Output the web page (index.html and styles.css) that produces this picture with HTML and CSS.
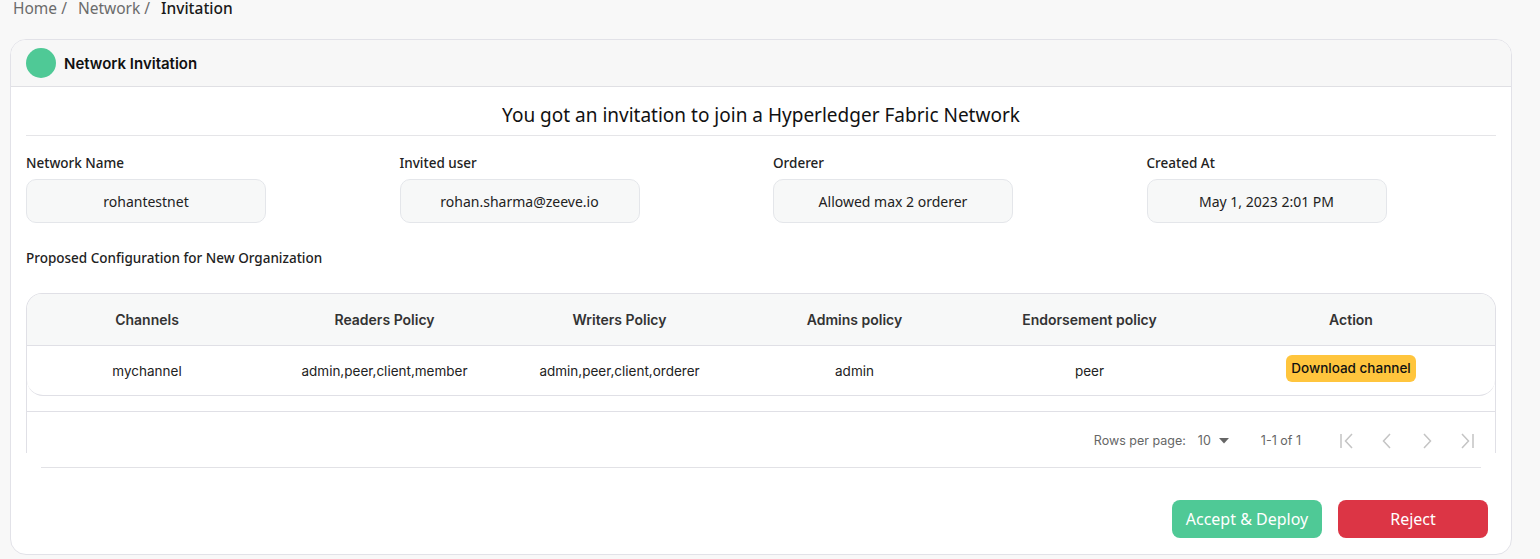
FILE: index.html
```html
<!DOCTYPE html>
<html>
<head>
<meta charset="utf-8">
<link rel="stylesheet" href="styles.css">
</head>
<body>
<nav class="crumbs">
  <span class="crumb">Home /</span>
  <span class="crumb">Network /</span>
  <span class="crumb current">Invitation</span>
</nav>
<section class="card">
  <header class="card-head">
    <span class="dot"></span>
    <span class="card-title">Network Invitation</span>
  </header>
  <div class="card-body">
    <h1 class="headline">You got an invitation to join a Hyperledger Fabric Network</h1>
    <div class="fields">
      <div class="field">
        <div class="label">Network Name</div>
        <div class="value">rohantestnet</div>
      </div>
      <div class="field">
        <div class="label">Invited user</div>
        <div class="value">rohan.sharma@zeeve.io</div>
      </div>
      <div class="field">
        <div class="label">Orderer</div>
        <div class="value">Allowed max 2 orderer</div>
      </div>
      <div class="field">
        <div class="label">Created At</div>
        <div class="value">May 1, 2023 2:01 PM</div>
      </div>
    </div>
    <div class="section-label">Proposed Configuration for New Organization</div>
    <div class="table-wrap">
      <div class="table">
        <div class="row head">
          <div class="cell">Channels</div>
          <div class="cell">Readers Policy</div>
          <div class="cell">Writers Policy</div>
          <div class="cell">Admins policy</div>
          <div class="cell">Endorsement policy</div>
          <div class="cell">Action</div>
        </div>
        <div class="row body">
          <div class="cell">mychannel</div>
          <div class="cell">admin,peer,client,member</div>
          <div class="cell">admin,peer,client,orderer</div>
          <div class="cell">admin</div>
          <div class="cell">peer</div>
          <div class="cell"><button class="dl">Download channel</button></div>
        </div>
      </div>
      <div class="pager">
        <span class="rpp">Rows per page:</span>
        <span class="sel">10 <svg width="10" height="6" viewBox="0 0 10 6"><path d="M0 0h10L5 5.5z" fill="#666"/></svg></span>
        <span class="count">1-1 of 1</span>
        <span class="nav">
          <svg width="24" height="24" viewBox="0 0 24 24"><path d="M6 5v14M17 5l-6.5 7 6.5 7" fill="none" stroke="#c4c4c4" stroke-width="1.5"/></svg>
          <svg width="24" height="24" viewBox="0 0 24 24"><path d="M15 5l-6.5 7 6.5 7" fill="none" stroke="#c4c4c4" stroke-width="1.5"/></svg>
          <svg width="24" height="24" viewBox="0 0 24 24"><path d="M9 5l6.5 7-6.5 7" fill="none" stroke="#c4c4c4" stroke-width="1.5"/></svg>
          <svg width="24" height="24" viewBox="0 0 24 24"><path d="M7 5l6.5 7-6.5 7M18 5v14" fill="none" stroke="#c4c4c4" stroke-width="1.5"/></svg>
        </span>
      </div>
    </div>
    <div class="rule"></div>
    <div class="actions">
      <button class="btn accept">Accept &amp; Deploy</button>
      <button class="btn reject">Reject</button>
    </div>
  </div>
</section>
</body>
</html>
```

FILE: styles.css
```css
* { box-sizing: border-box; }
html, body { margin: 0; padding: 0; }
body {
  background: #f8f8f8;
  font-family: "Noto Sans", "Open Sans", sans-serif;
  color: #1a1a1a;
  padding: 0 28px 0 10px;
  height: 559px;
  overflow: hidden;
}
.crumbs {
  height: 39px;
  padding-left: 3px;
  display: flex;
  gap: 11px;
  font-size: 15.5px;
  line-height: 16px;
}
.crumb { color: #6b6b6b; }
.crumb.current { color: #1a1a1a; font-weight: 500; }

.card {
  background: #fff;
  border: 1px solid #e2e2e8;
  border-radius: 16px;
  height: 516px;
  overflow: hidden;
}
.card-head {
  height: 47px;
  background: #f7f7f7;
  border-bottom: 1px solid #e0e0e4;
  display: flex;
  align-items: center;
  gap: 8px;
  padding-left: 15px;
}
.dot {
  width: 30px;
  height: 30px;
  border-radius: 50%;
  background: #4fc996;
}
.card-title {
  font-family: Inter, sans-serif;
  font-weight: 600;
  font-size: 15px;
  color: #111;
}
.card-body { padding: 0 15px; }
.headline {
  margin: 0;
  padding: 16px 0 8px;
  line-height: 24px;
  font-size: 19px;
  font-weight: 400;
  text-align: center;
  border-bottom: 1px solid #e5e5e8;
  color: #111;
}
.fields {
  display: flex;
  gap: 133.5px;
  margin-top: 17px;
}
.field { width: 240px; }
.label {
  font-size: 13.5px;
  line-height: 20px;
  font-weight: 500;
  color: #222;
}
.value {
  margin-top: 6px;
  height: 44px;
  border: 1px solid #e4e6ea;
  border-radius: 10px;
  background: #f7f8f8;
  display: flex;
  align-items: center;
  justify-content: center;
  font-size: 14px;
  color: #222;
}
.section-label {
  margin-top: 25px;
  font-size: 13.5px;
  line-height: 20px;
  font-weight: 500;
  color: #222;
}
.table-wrap {
  margin-top: 25px;
  height: 160px;
  border: 1px solid #e0e0e6;
  border-bottom: none;
  border-radius: 16px 16px 0 0;
  font-family: Inter, sans-serif;
}
.table {
  border-bottom: 1px solid #e0e0e6;
  border-radius: 0 0 16px 16px;
  overflow: hidden;
}
.row {
  display: grid;
  grid-template-columns: 240px 235px 235px 235px 235px 1fr;
}
.row.head {
  height: 52px;
  background: #f7f8f8;
  border-bottom: 1px solid #e0e0e6;
  border-radius: 15px 15px 0 0;
  font-weight: 600;
  font-size: 14px;
  color: #333;
}
.row.body {
  height: 49px;
  font-size: 13.5px;
  color: #222;
}
.cell {
  display: flex;
  align-items: center;
  justify-content: center;
}
.dl {
  border: none;
  background: #ffc53d;
  border-radius: 6px;
  height: 27px;
  padding: 0 5px;
  font-family: Inter, sans-serif;
  font-weight: 500;
  font-size: 13.5px;
  color: #111;
  margin-bottom: 5px;
}
.pager {
  margin-top: 15px;
  border-top: 1px solid #e0e0e6;
  height: 58px;
  display: flex;
  align-items: center;
  justify-content: flex-end;
  padding-right: 16px;
  font-size: 12.5px;
  color: #666;
}
.rpp { margin-right: 12px; }
.sel { display: flex; align-items: center; gap: 8px; margin-right: 32px; }
.count { margin-right: 34px; }
.nav { display: flex; gap: 16px; }
.nav svg { display: block; }
.rule {
  margin: 14px 15px 0;
  border-top: 1px solid #e2e2e6;
}
.actions {
  display: flex;
  justify-content: flex-end;
  gap: 16px;
  margin-top: 32px;
  padding-right: 8px;
}
.btn {
  width: 150px;
  height: 38px;
  border: none;
  border-radius: 8px;
  color: #fff;
  font-family: "Noto Sans", sans-serif;
  font-size: 16px;
}
.accept { background: #4fc996; }
.reject { background: #dc3545; }
```
